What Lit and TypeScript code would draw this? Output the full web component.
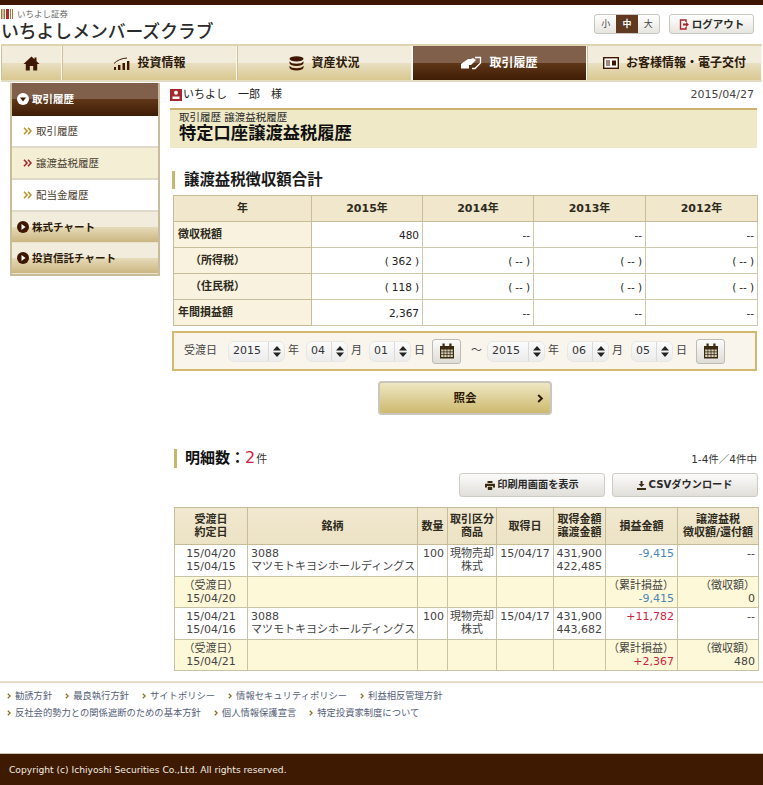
import { LitElement, html, css, svg } from "lit";
import { customElement } from "lit/decorators.js";

const home = svg`<svg width="17" height="15" viewBox="0 0 17 15"><path fill="#3f1700" d="M8.500 0.500 0.500 8h2.300v6.500h4V10h3.400v4.500h4V8h2.300l-3-2.800V1.500h-2v1.800z"/></svg>`;
const chart = svg`<svg width="17" height="13" viewBox="0 0 17 13"><path fill="#3f1700" d="M1 10h2v3H1zM5 8h2.400v5H5zM9.500 6H12v7H9.500zM14 4h2.400v9H14z"/><path fill="none" stroke="#3f1700" d="M1 6.500Q6 1.500 14 1"/></svg>`;
const coins = svg`<svg width="15" height="15" viewBox="0 0 15 15"><g fill="#3f1700"><ellipse cx="7.500" cy="2.800" rx="7" ry="2.600"/><path d="M.5 5.200c1 1.700 3.600 2.500 7 2.500s6-.8 7-2.500v2c-.6 1.800-3.400 2.800-7 2.800s-6.400-1-7-2.800z"/><path d="M.5 9.800c1 1.700 3.600 2.500 7 2.500s6-.8 7-2.500v2c-.6 1.800-3.400 2.800-7 2.800s-6.400-1-7-2.800z"/></g></svg>`;
const trade = svg`<svg width="21" height="14" viewBox="0 0 21 14"><path fill="#fff" d="M0 8 7 3h3l2-1 3 2-5 5H8v3.500H0z"/><path fill="none" stroke="#fff" stroke-width="1.300" d="M14 1.500h5.500V7l-5.500 5.500h-3"/></svg>`;
const card = svg`<svg width="16" height="12" viewBox="0 0 16 12"><rect x=".7" y=".7" width="14.600" height="10.600" fill="#fff" stroke="#3f1700" stroke-width="1.400"/><path fill="#3f1700" d="M3 3.500h4v1H3zM3 5.500h4v1H3zM3 7.500h4v1H3zM9 3.500h4v5H9z"/></svg>`;
const cal = svg`<svg width="16" height="16" viewBox="0 0 16 16"><path fill="#3a2a10" d="M1 3h14v12.500H1z"/><path fill="#d8d2bf" d="M2.200 6.500h2.300v2H2.200zM5.300 6.500h2.300v2H5.300zM8.400 6.500h2.300v2H8.400zM11.500 6.500h2.300v2h-2.300zM2.200 9.300h2.300v2H2.200zM5.300 9.300h2.300v2H5.300zM8.400 9.300h2.300v2H8.400zM11.500 9.300h2.300v2h-2.300zM2.200 12.100h2.300v2H2.200zM5.300 12.100h2.300v2H5.300zM8.400 12.100h2.300v2H8.400zM11.500 12.100h2.300v2h-2.300z"/><path fill="#3a2a10" d="M3.500.5h2.200v3.500H3.500zM10.300.5h2.200v3.500h-2.200z"/></svg>`;
const spin = svg`<svg width="8" height="11" viewBox="0 0 8 11"><path fill="#222" d="M4 0 8 4.500H0zM4 11 0 6.500h8z"/></svg>`;
const person = svg`<svg width="12" height="12" viewBox="0 0 12 12"><rect width="12" height="12" fill="#a5282c"/><circle cx="6" cy="3.800" r="2" fill="#fff"/><path fill="#fff" d="M2.500 10V7.500h7V10z"/></svg>`;
const dbl = (c: string) => svg`<svg class="dbl" width="9" height="8" viewBox="0 0 9 8"><path fill="none" stroke="${c}" stroke-width="1.600" d="M1 .8 4 4 1 7.200M5 .8 8 4 5 7.200"/></svg>`;
const down = svg`<svg width="12" height="12" viewBox="0 0 12 12"><circle cx="6" cy="6" r="6" fill="#fff"/><path fill="#3f1700" d="M3 4.500h6L6 8.500z"/></svg>`;
const right = svg`<svg width="12" height="12" viewBox="0 0 12 12"><circle cx="6" cy="6" r="6" fill="#3f1700"/><path fill="#fff" d="M4.500 3v6l4-3z"/></svg>`;
const chev = (c: string, w = 5, h = 7) => svg`<svg width="${w}" height="${h}" viewBox="0 0 5 7"><path fill="none" stroke="${c}" stroke-width="1.600" d="M1 .6 4 3.500 1 6.400"/></svg>`;
const logout = svg`<svg width="11" height="11" viewBox="0 0 11 11"><path fill="none" stroke="#a5282c" stroke-width="1.400" d="M7 3V1H1.500v9H7V8"/><path fill="#a5282c" d="M4 4.500h3V3l3 2.500L7 8V6.500H4z"/></svg>`;
const logoMark = svg`<svg width="12" height="10" viewBox="0 0 12 10"><path fill="#9a7b3a" d="M0 0h1.500v10H0zM2.500 0H4v10H2.500z"/><path fill="#b3282c" d="M5 0h3v10H5z"/><path fill="#9a7b3a" d="M9 0h1v10H9zM11 0h1v10h-1z"/></svg>`;
const printer = svg`<svg width="10" height="9" viewBox="0 0 10 9"><path fill="#3a2a10" d="M2.500 0h5v2h-5zM0 2.800h10v3.700H8V5H2v1.500H0zM2.800 5.800h4.400V9H2.800z"/></svg>`;
const dl = svg`<svg width="9" height="9" viewBox="0 0 9 9"><path fill="#3a2a10" d="M3.500 0h2v3h2L4.500 6l-3-3h2zM0 7h9v2H0z"/></svg>`;

const summary = [
  ["徴収税額", "m", "480", "--", "--", "--", "--"].filter((_, i) => i !== 6),
  ["（所得税）", "i", "(362)", "(--)", "(--)", "(--)"],
  ["（住民税）", "i", "(118)", "(--)", "(--)", "(--)"],
  ["年間損益額", "m", "2,367", "--", "--", "--"],
];

const cell = (v: string) =>
  v.startsWith("(")
    ? html`<span class="po">(</span>${v.slice(1, -1)}<span class="pc">)</span>`
    : v;

const details = [
  { d1: "15/04/20", d2: "15/04/15", buy: "422,485", pl: "-9,415", plc: "neg", cum: "-9,415", cumc: "neg", tax: "0", rd: "15/04/20" },
  { d1: "15/04/21", d2: "15/04/16", buy: "443,682", pl: "+11,782", plc: "pos", cum: "+2,367", cumc: "pos", tax: "480", rd: "15/04/21" },
];

@customElement("app-root")
export class AppRoot extends LitElement {
  static styles = css`
    :host { display: block; width: 763px; height: 785px; overflow: hidden; background: #fff; color: #222;
      font: 11px/16px "DejaVu Sans", "Noto Sans CJK JP", sans-serif; }
    * { box-sizing: border-box; }
    .page { display: flex; flex-direction: column; height: 785px; }
    .topbar { height: 5px; background: #3f1700; flex: none; }
    .head { height: 39px; flex: none; display: flex; justify-content: space-between; }
    .logo { padding: 4px 0 0 1px; }
    .brand { display: flex; align-items: center; gap: 4px; font-size: 8.500px; line-height: 10px; color: #666; }
    .site { font-size: 17.800px; line-height: 26px; color: #2b2b2b; font-weight: 500; }
    .tools { display: flex; align-items: flex-start; gap: 9px; padding: 9px 9px 0 0; }
    .size { display: flex; height: 20px; border: 1px solid #c8c6c0; border-radius: 3px; background: linear-gradient(#fff, #e7e5df); overflow: hidden; }
    .size span { width: 21.300px; text-align: center; font-size: 9px; line-height: 18px; color: #444; }
    .size .on { background: #5f3a20; color: #fff; font-weight: 700; }
    .out { display: flex; align-items: center; justify-content: center; gap: 2px; width: 85px; height: 20px; border: 1px solid #c8c6c0; border-radius: 3px; background: linear-gradient(#fff, #e7e5df); font-size: 10.500px; font-weight: 700; color: #2a2a2a; }
    nav { flex: none; height: 38px; margin-left: 1px; width: 761px; display: grid; grid-template-columns: 61px 175px 175px 175px 175px; border-top: 2px solid #dfd3b0; border-bottom: 2px solid #e4dcc3; }
    nav a { display: flex; align-items: center; justify-content: center; gap: 7px; font-size: 12px; font-weight: 700; color: #2e1a08;
      background: linear-gradient(#f2ecdc 0 50%, #e9dfc2 50%, #d9c88f 100%); border-left: 1px solid #cfc09a; border-right: 1px solid #fbf8ef; }
    nav a.on { background: linear-gradient(#80604b 0 50%, #5f3718 50%, #3f1c05 100%); color: #fff; border-color: #fff; }
    .body { flex: none; display: grid; grid-template-columns: 150px 587px; column-gap: 10px; margin-left: 10px; height: 599px; padding-top: 1px; }
    aside { align-self: start; border: 2px solid #c9bc98; border-top: 0; width: 150px; }
    .sh { height: 31px; display: flex; align-items: center; gap: 3px; padding-left: 5px; padding-bottom: 1px; font-weight: 700; font-size: 10.500px; color: #2e1a08;
      background: linear-gradient(#f2ecdc 0 50%, #e6dbba 50%, #cbb681 100%); border-bottom: 1px solid #e8e2cf; }
    .sh.on { background: linear-gradient(#80604b 0 50%, #5f3718 50%, #3f1c05 100%); color: #fff; height: 33px; border: 0; }
    .si { height: 32px; display: flex; align-items: center; gap: 4px; padding-left: 11px; font-size: 10.500px; color: #4a4030; background: #fff; border-bottom: 2px solid #dfdac9; }
    .si.on { background: #f3eed4; }
    main { padding-top: 5px; min-width: 0; }
    .user { display: flex; justify-content: space-between; align-items: center; height: 14px; font-size: 11px; }
    .user div { display: flex; align-items: center; gap: 1px; }
    .user .date { color: #444; padding-right: 3px; font-size: 11px; }
    .title { margin-top: 6px; height: 40px; background: #efe9c8; border-top: 2px solid #c9b36c; padding: 1px 0 0 9px; }
    .crumb { font-size: 10.500px; line-height: 12px; color: #2a2a2a; }
    .title h1 { margin: 0; font-size: 17.300px; line-height: 20px; font-weight: 700; color: #111; }
    h2 { margin: 23px 0 0 2px; border-left: 3px solid #c9b66d; padding-left: 9px; font-size: 15.400px; line-height: 19px; height: 18px; font-weight: 700; color: #1a1a1a; }
    table { border-collapse: collapse; table-layout: fixed; }
    td, th { border: 1px solid #cfc8ac; padding: 0 3px; font-size: 10.500px; }
    .sum { margin: 6px 0 0 3px; width: 584px; }
    .sum th, .sum td { height: 26px; line-height: 14px; }
    .sum th { background: #f0e7cd; color: #2e2a1c; font-size: 11px; text-align: center; border-color: #c7bc98; }
    .sum th.rl { text-align: left; background: #f8f2df; font-size: 11px; padding-left: 4px; }
    .sum th.i { padding-left: 16px; }
    .sum td { text-align: right; }
    .po { margin-right: 3px; } .pc { margin-left: 3px; }
    .c0 { width: 138px; } .c1 { width: 111px; } .c2 { width: 111px; } .c3 { width: 112px; } .c4 { width: 112px; }
    .form { margin: 5px 0 0 2px; width: 585px; height: 40px; border: 2px solid #d2b96e; background: #faf5ec; display: flex; align-items: center; padding-left: 10px; color: #444; font-size: 11px; }
    .sel { display: flex; align-items: center; height: 21px; border: 1px solid #e9e7e2; border-radius: 6px; background: linear-gradient(#fbfbfb, #ececec); color: #333; font-size: 11px; }
    .sel b { font-weight: 400; padding-left: 4px; flex: 1; }
    .sel i { width: 16px; height: 100%; border-left: 1px solid #dcdad4; display: flex; align-items: center; justify-content: center; }
    .y { width: 57px; margin-left: 11px; } .m { width: 42px; } .y2 { width: 58px; } .ml { margin-left: 7px; } .ml2 { margin-left: 8px; }
    .u { margin-left: 3px; }
    .calb { margin-left: 7px; width: 29px; height: 25px; border: 1px solid #bdbbb4; border-radius: 3px; background: linear-gradient(#fbfbfb, #dedcd6); display: flex; align-items: center; justify-content: center; }
    .calb.last { margin-left: 9px; }
    .tilde { margin: 0 5px 0 10px; }
    .go { margin: 10px 0 0 208px; width: 174px; height: 34px; border: 2px solid #c9c6bd; border-radius: 4px; background: linear-gradient(#eee7c2, #cdb96e); display: flex; align-items: center; justify-content: center; position: relative; font-weight: 700; font-size: 11.500px; color: #2e1a08; }
    .go svg { position: absolute; right: 7px; top: 11px; }
    .count { margin: 35px 0 0 4px; height: 17px; display: flex; justify-content: space-between; align-items: center; }
    .count div { border-left: 3px solid #c9b66d; padding-left: 8px; font-size: 15px; font-weight: 700; line-height: 17px; color: #111; white-space: nowrap; }
    .count em { font-style: normal; font-weight: 400; color: #d0213f; font-size: 16px; }
    .count small { font-weight: 400; font-size: 11px; color: #333; margin-left: 1px; }
    .count span { font-size: 10.500px; color: #333; }
    .btns { display: flex; justify-content: flex-end; gap: 7px; margin: 6px -1px 0 0; }
    .btns a { width: 146px; height: 24px; border: 1px solid #cfccc4; border-radius: 3px; background: linear-gradient(#fafafa, #e1dfd9); display: flex; align-items: center; justify-content: center; gap: 2px; font-size: 10.200px; font-weight: 700; color: #2a2a2a; }
    .det { margin: 10px 0 0 4px; width: 584px; }
    .det th { background: linear-gradient(#f0e8d0, #ece2c4); height: 37px; line-height: 13px; font-size: 11px; font-weight: 700; border-color: #c7bc98; text-align: center; color: #2e2a1c; padding: 0 1px; }
    .det td { height: 32px; line-height: 13px; font-size: 11px; vertical-align: top; padding: 2px 3px 0; white-space: nowrap; color: #444; border-color: #c9c3a5; }
    .det .sub td { background: #fdf8d8; height: 31px; }
    .det .ctr { text-align: center; padding-left: 1px; padding-right: 1px; }
    .det .r { text-align: right; padding-left: 0; }
    .neg { color: #4a86b8; } .pos { color: #d0213f; }
    .d0 { width: 73px; } .d1 { width: 170px; } .d2 { width: 30px; } .d3 { width: 49px; } .d4 { width: 57px; } .d5 { width: 52px; } .d6 { width: 72px; } .d7 { width: 81px; }
    .foot { flex: none; border-top: 2px solid #e8dfc8; height: 72px; padding: 4px 0 0 7px; }
    .fl { display: flex; gap: 13px; height: 17px; align-items: center; font-size: 9.300px; color: #555e78; white-space: nowrap; }
    .fl span { display: flex; align-items: center; gap: 4px; }
    .copy { flex: none; height: 32px; background: #3f1a03; border-top: 1px solid #ccc4b4; color: #f2ede2; font-size: 9.150px; display: flex; align-items: center; padding-left: 9px; }
  `;

  render() {
    return html`<div class="page">
      <div class="topbar"></div>
      <header class="head">
        <div class="logo">
          <div class="brand">${logoMark}<span>いちよし証券</span></div>
          <div class="site">いちよしメンバーズクラブ</div>
        </div>
        <div class="tools">
          <div class="size"><span>小</span><span class="on">中</span><span>大</span></div>
          <div class="out">${logout}<span>ログアウト</span></div>
        </div>
      </header>
      <nav>
        <a>${home}</a>
        <a>${chart}<span>投資情報</span></a>
        <a>${coins}<span>資産状況</span></a>
        <a class="on">${trade}<span>取引履歴</span></a>
        <a>${card}<span>お客様情報・電子交付</span></a>
      </nav>
      <div class="body">
        <aside>
          <div class="sh on">${down}<span>取引履歴</span></div>
          <div class="si">${dbl("#b8962e")}<span>取引履歴</span></div>
          <div class="si on">${dbl("#a5282c")}<span>譲渡益税履歴</span></div>
          <div class="si">${dbl("#b8962e")}<span>配当金履歴</span></div>
          <div class="sh">${right}<span>株式チャート</span></div>
          <div class="sh">${right}<span>投資信託チャート</span></div>
        </aside>
        <main>
          <div class="user"><div>${person}<span>いちよし　一郎　様</span></div><span class="date">2015/04/27</span></div>
          <div class="title">
            <div class="crumb">取引履歴 譲渡益税履歴</div>
            <h1>特定口座譲渡益税履歴</h1>
          </div>
          <h2>譲渡益税徴収額合計</h2>
          <table class="sum">
            <colgroup><col class="c0"><col class="c1"><col class="c2"><col class="c3"><col class="c4"></colgroup>
            <tr><th>年</th><th>2015年</th><th>2014年</th><th>2013年</th><th>2012年</th></tr>
            ${summary.map((r) => html`<tr>
              <th class="rl ${r[1] === "i" ? "i" : ""}">${r[0]}</th>
              <td>${cell(r[2])}</td><td>${cell(r[3])}</td><td>${cell(r[4])}</td><td>${cell(r[5])}</td>
            </tr>`)}
          </table>
          <div class="form">
            <span>受渡日</span>
            <div class="sel y"><b>2015</b><i>${spin}</i></div><span class="u">年</span>
            <div class="sel m ml"><b>04</b><i>${spin}</i></div><span class="u">月</span>
            <div class="sel m ml"><b>01</b><i>${spin}</i></div><span class="u">日</span>
            <div class="calb">${cal}</div>
            <span class="tilde">～</span>
            <div class="sel y2"><b>2015</b><i>${spin}</i></div><span class="u">年</span>
            <div class="sel m ml2"><b>06</b><i>${spin}</i></div><span class="u">月</span>
            <div class="sel m ml2"><b>05</b><i>${spin}</i></div><span class="u">日</span>
            <div class="calb last">${cal}</div>
          </div>
          <div class="go"><span>照会</span>${chev("#2e1a08", 6, 9)}</div>
          <div class="count"><div>明細数：<em>2</em><small>件</small></div><span>1-4件／4件中</span></div>
          <div class="btns">
            <a>${printer}<span>印刷用画面を表示</span></a>
            <a>${dl}<span>CSVダウンロード</span></a>
          </div>
          <table class="det">
            <colgroup><col class="d0"><col class="d1"><col class="d2"><col class="d3"><col class="d4"><col class="d5"><col class="d6"><col class="d7"></colgroup>
            <tr>
              <th>受渡日<br>約定日</th><th>銘柄</th><th>数量</th><th>取引区分<br>商品</th><th>取得日</th><th>取得金額<br>譲渡金額</th><th>損益金額</th><th>譲渡益税<br>徴収額/還付額</th>
            </tr>
            ${details.map((d) => html`
              <tr>
                <td class="ctr">${d.d1}<br>${d.d2}</td>
                <td>3088<br>マツモトキヨシホールディングス</td>
                <td class="r">100</td>
                <td class="ctr">現物売却<br>株式</td>
                <td class="ctr">15/04/17</td>
                <td class="r">431,900<br>${d.buy}</td>
                <td class="r"><span class="${d.plc}">${d.pl}</span></td>
                <td class="r">--</td>
              </tr>
              <tr class="sub">
                <td class="ctr">（受渡日）<br>${d.rd}</td>
                <td></td><td></td><td></td><td></td><td></td>
                <td class="r">（累計損益）<br><span class="${d.cumc}">${d.cum}</span></td>
                <td class="r">（徴収額）<br>${d.tax}</td>
              </tr>`)}
          </table>
        </main>
      </div>
      <footer class="foot">
        <div class="fl">
          ${["勧誘方針", "最良執行方針", "サイトポリシー", "情報セキュリティポリシー", "利益相反管理方針"].map((t) => html`<span>${chev("#8a6d1d", 4, 6)}${t}</span>`)}
        </div>
        <div class="fl">
          ${["反社会的勢力との関係遮断のための基本方針", "個人情報保護宣言", "特定投資家制度について"].map((t) => html`<span>${chev("#8a6d1d", 4, 6)}${t}</span>`)}
        </div>
      </footer>
      <div class="copy">Copyright (c) Ichiyoshi Securities Co.,Ltd. All rights reserved.</div>
    </div>`;
  }
}
